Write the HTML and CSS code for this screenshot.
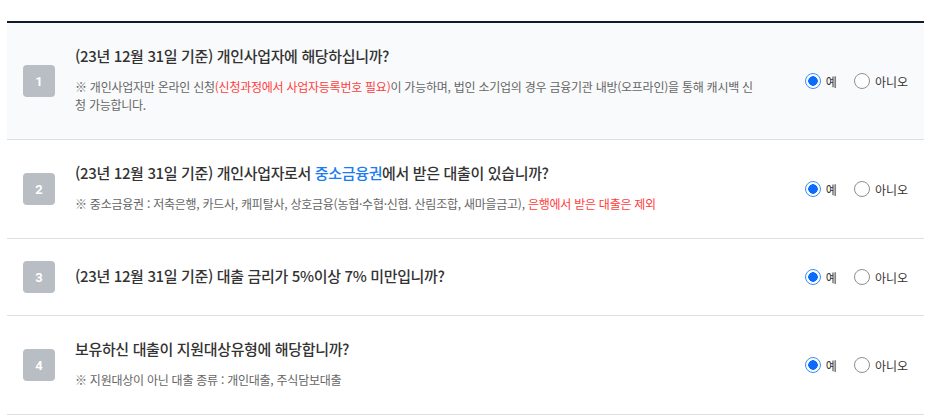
FILE: index.html
```html
<!DOCTYPE html>
<html lang="ko">
<head>
<meta charset="utf-8">
<title>지원대상 확인</title>
<link rel="stylesheet" href="styles.css">
</head>
<body>
<div class="survey">
  <div class="row row-shaded">
    <span class="badge">1</span>
    <div class="body">
      <p class="title">(23년 12월 31일 기준) 개인사업자에 해당하십니까?</p>
      <p class="note">※ 개인사업자만 온라인 신청<span class="red">(신청과정에서 사업자등록번호 필요)</span>이 가능하며, 법인 소기업의 경우 금융기관 내방(오프라인)을 통해 캐시백 신청 가능합니다.</p>
    </div>
    <div class="choices">
      <label class="choice"><input type="radio" name="q1" checked><span>예</span></label>
      <label class="choice"><input type="radio" name="q1"><span>아니오</span></label>
    </div>
  </div>
  <div class="row">
    <span class="badge">2</span>
    <div class="body">
      <p class="title">(23년 12월 31일 기준) 개인사업자로서 <span class="blue">중소금융권</span>에서 받은 대출이 있습니까?</p>
      <p class="note">※ 중소금융권 : 저축은행, 카드사, 캐피탈사, 상호금융(농협·수협·신협. 산림조합, 새마을금고), <span class="red">은행에서 받은 대출은 제외</span></p>
    </div>
    <div class="choices">
      <label class="choice"><input type="radio" name="q2" checked><span>예</span></label>
      <label class="choice"><input type="radio" name="q2"><span>아니오</span></label>
    </div>
  </div>
  <div class="row">
    <span class="badge">3</span>
    <div class="body">
      <p class="title">(23년 12월 31일 기준) 대출 금리가 5%이상 7% 미만입니까?</p>
    </div>
    <div class="choices">
      <label class="choice"><input type="radio" name="q3" checked><span>예</span></label>
      <label class="choice"><input type="radio" name="q3"><span>아니오</span></label>
    </div>
  </div>
  <div class="row">
    <span class="badge">4</span>
    <div class="body">
      <p class="title">보유하신 대출이 지원대상유형에 해당합니까?</p>
      <p class="note">※ 지원대상이 아닌 대출 종류 : 개인대출, 주식담보대출</p>
    </div>
    <div class="choices">
      <label class="choice"><input type="radio" name="q4" checked><span>예</span></label>
      <label class="choice"><input type="radio" name="q4"><span>아니오</span></label>
    </div>
  </div>
</div>
</body>
</html>
```
FILE: styles.css
```css
* { box-sizing: border-box; }
html, body { margin: 0; padding: 0; background: #fff; }
body {
  font-family: "Noto Sans CJK KR", "Noto Sans", sans-serif;
  color: #333;
  padding-top: 21px;
}
.survey {
  margin-left: 7px;
  width: 917px;
  border-top: 2px solid #0f1a2b;
}
.row {
  display: flex;
  align-items: center;
  padding: 22px 16px;
  border-bottom: 1px solid #dedfe1;
}
.row-shaded { background: #f9fafb; }
.badge {
  flex: none;
  width: 32px;
  height: 32px;
  border-radius: 4px;
  background: #b9bdc4;
  color: #fff;
  font-family: "Roboto", "Noto Sans", sans-serif;
  font-weight: 700;
  font-size: 13px;
  display: flex;
  align-items: center;
  justify-content: center;
}
.body {
  flex: 1;
  margin-left: 20px;
  min-width: 0;
  padding-bottom: 3px;
}
.title {
  margin: 0;
  font-size: 15px;
  line-height: 22px;
  font-weight: 500;
  color: #333;
  letter-spacing: -0.35px;
}
.note {
  margin: 11px 0 0 0;
  font-size: 12px;
  line-height: 18px;
  color: #666;
  letter-spacing: -0.25px;
}
.red { color: #ff3d3d; }
.blue { color: #1a7cf0; }
.choices {
  flex: none;
  display: flex;
  align-items: center;
  gap: 17px;
  margin-left: 45px;
}
.choice {
  display: flex;
  align-items: center;
  gap: 5px;
  font-size: 12px;
  color: #333;
}
.choice input {
  appearance: none;
  -webkit-appearance: none;
  margin: 0;
  width: 16px;
  height: 16px;
  border-radius: 50%;
  border: 1px solid #8f8f8f;
  background: #fff;
}
.choice input:checked {
  border: 1.5px solid #3b8cff;
  background: radial-gradient(circle, #0a6cff 0 4.5px, #fff 5px);
}
```
